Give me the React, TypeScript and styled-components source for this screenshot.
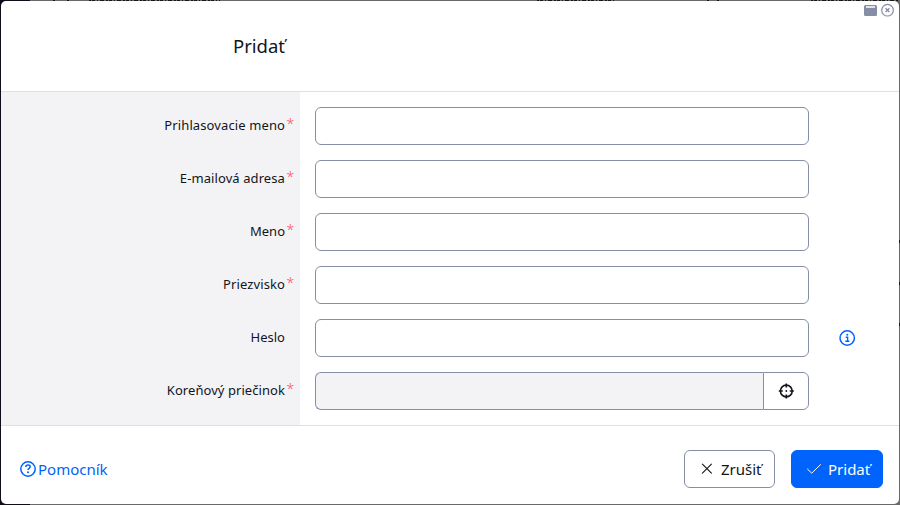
import React from 'react';
import styled, { createGlobalStyle, css } from 'styled-components';

const GlobalStyle = createGlobalStyle`
  *, *::before, *::after { box-sizing: border-box; }
  body {
    margin: 0;
    overflow: hidden;
    background: #69696a;
    color: #13151b;
    font-family: "Noto Sans", "Open Sans", sans-serif;
  }
`;

const Backdrop = styled.div`
  position: relative;
  height: 505px;
  padding: 1px;
  background: linear-gradient(90deg, #100c18 30px, #69696a 30px);
`;

const PageTrace = styled.svg`
  position: absolute;
  inset: 0;
  width: 900px;
  height: 505px;
`;

const Dialog = styled.section`
  position: relative;
  display: flex;
  flex-direction: column;
  height: 503px;
  background: #fff;
  border-radius: 5px;
  overflow: hidden;
`;

const Header = styled.header`
  display: flex;
  flex: 0 0 91px;
  align-items: center;
  padding-left: 232px;
  border-bottom: 1px solid #dfe0e3;
`;

const Title = styled.h1`
  margin: 0;
  font-size: 18.5px;
  font-weight: 400;
  line-height: 28px;
`;

const WindowControls = styled.div`
  position: absolute;
  top: 2px;
  right: 4px;
  display: flex;
  gap: 3px;
`;

const IconButton = styled.button`
  display: flex;
  padding: 0;
  border: 0;
  background: none;
  color: #868ea5;
`;

const Form = styled.form`
  flex: 0 0 333px;
  padding-top: 15px;
  background: linear-gradient(90deg, #f3f3f6 299px, #fff 299px);
`;

const Row = styled.div`
  display: grid;
  grid-template-columns: 299px 524px 45px;
  height: 38px;
  margin-bottom: 15px;
`;

const Label = styled.label<{ $track: number }>`
  justify-self: end;
  position: relative;
  margin-right: 15px;
  font-size: 13px;
  line-height: 36px;
  letter-spacing: ${({ $track }) => $track}px;
  white-space: nowrap;
`;

const Required = styled.span`
  position: absolute;
  left: calc(100% + 1.5px);
  top: -1px;
  color: #ff4b58;
  font-size: 14px;
  font-weight: 300;
  letter-spacing: 0;
`;

const Field = styled.div`
  display: flex;
  padding: 0 15px;
`;

const Input = styled.input<{ $joined?: boolean }>`
  flex: 1;
  min-width: 0;
  height: 38px;
  padding: 0 12px;
  border: 1px solid #868ea5;
  border-radius: 6px;
  outline: 0;
  background: #fff;
  font: inherit;
  ${({ $joined }) => $joined && css`
    border-radius: 6px 0 0 6px;
    border-right: 0;
    background: #f3f3f6;
  `}
`;

const PickButton = styled.button`
  display: flex;
  align-items: center;
  justify-content: center;
  width: 46px;
  height: 38px;
  padding: 0;
  border: 1px solid #868ea5;
  border-radius: 0 6px 6px 0;
  background: #fff;
  color: #13151b;
`;

const Hint = styled.div`
  display: flex;
  align-items: center;
  padding-left: 15px;
  color: #0063fb;
`;

const Footer = styled.footer`
  display: flex;
  flex: 1;
  align-items: center;
  gap: 16px;
  padding: 8px 16px 0 18px;
  border-top: 1px solid #dfe0e3;
`;

const HelpLink = styled.a`
  display: flex;
  align-items: center;
  gap: 1px;
  margin-right: auto;
  color: #0063fb;
  font-size: 15px;
  line-height: 24px;
`;

const Button = styled.button<{ $primary?: boolean }>`
  display: flex;
  align-items: center;
  gap: 6px;
  width: ${({ $primary }) => ($primary ? 92 : 91)}px;
  height: 38px;
  padding: 0 0 0 14px;
  border: 1px solid ${({ $primary }) => ($primary ? '#0063fb' : '#868ea5')};
  border-radius: 6px;
  background: ${({ $primary }) => ($primary ? '#0063fb' : '#fff')};
  color: ${({ $primary }) => ($primary ? '#fff' : '#13151b')};
  font: inherit;
  font-size: 15px;
  white-space: nowrap;
`;

const WindowIcon = () => (
  <svg width="15" height="16" viewBox="0 0 15 16">
    <rect x="1" y="2" width="13" height="11" rx="1.5" fill="currentColor" />
    <path d="M3 4h9" stroke="#fff" strokeWidth="1.3" />
  </svg>
);

const CloseIcon = () => (
  <svg width="14" height="16" viewBox="0 0 14 16" fill="none" stroke="currentColor">
    <circle cx="6.5" cy="7.2" r="5.8" strokeWidth="1.2" />
    <path d="m4.6 5.3 3.8 3.8M8.4 5.3 4.6 9.1" strokeWidth="1.4" />
  </svg>
);

const InfoIcon = () => (
  <svg width="17" height="17" viewBox="0 0 17 17" fill="none" stroke="currentColor">
    <circle cx="8.2" cy="8" r="7.2" strokeWidth="1.5" />
    <path d="M6.7 7.2h1.9v4.1M6.3 11.3h4" strokeWidth="1.4" />
    <circle cx="8.3" cy="4.7" r="1" fill="currentColor" stroke="none" />
  </svg>
);

const HelpIcon = () => (
  <svg width="18" height="18" viewBox="0 0 18 18" fill="none" stroke="currentColor">
    <circle cx="9" cy="9" r="7.2" strokeWidth="1.5" />
    <path d="M6.8 7c.1-1.3 1-1.9 2.2-1.9 1.3 0 2.2.7 2.2 1.7 0 1.5-2.1 1.5-2.1 3.1" strokeWidth="1.5" />
    <circle cx="9" cy="12.2" r="1" fill="currentColor" stroke="none" />
  </svg>
);

const TargetIcon = () => (
  <svg width="16" height="16" viewBox="0 0 16 16" fill="none" stroke="currentColor">
    <circle cx="8.3" cy="8" r="5.9" strokeWidth="1.6" />
    <path d="M8.3 .5v4M8.3 11.5v4M.8 8h4M11.8 8h4" strokeWidth="1.6" />
    <circle cx="8.3" cy="8" r=".9" fill="currentColor" stroke="none" />
  </svg>
);

const CancelIcon = () => (
  <svg width="16" height="16" viewBox="0 0 16 16" fill="none" stroke="currentColor" strokeLinecap="round">
    <path d="m3.4 3.2 9 9M12.4 3.2l-9 9" strokeWidth="1.1" />
  </svg>
);

const CheckIcon = () => (
  <svg width="16" height="16" viewBox="0 0 16 16" fill="none" stroke="currentColor" strokeLinecap="round" strokeLinejoin="round">
    <path d="m1.5 8.1 4.2 4.1 8.8-8.6" strokeWidth="1" />
  </svg>
);

const FIELDS = [
  { id: 'login', label: 'Prihlasovacie meno', required: true, track: 0.11 },
  { id: 'email', label: 'E-mailová adresa', required: true, track: 0.09 },
  { id: 'firstName', label: 'Meno', required: true, track: 0 },
  { id: 'lastName', label: 'Priezvisko', required: true, track: 0.1 },
  { id: 'password', label: 'Heslo', required: false, track: 0 },
  { id: 'folder', label: 'Koreňový priečinok', required: true, track: 0.06 },
];

export default function App() {
  return (
    <>
      <GlobalStyle />
      <Backdrop>
        <PageTrace viewBox="0 0 900 505" fill="none" stroke="#171719">
          <path d="M53 .5h2M67 .5h2" />
          <path d="M89 .5h131M537 .5h79M811 .5h87" strokeDasharray="2 1 3 2 1 2 4 2" />
          <path d="M707 .5h2M717 .5h2" />
          <path d="M899.5 240v3M899.5 282v3M899.5 323v3" />
        </PageTrace>
        <Dialog role="dialog" aria-labelledby="dialog-title">
          <Header>
            <Title id="dialog-title">Pridať</Title>
          </Header>
          <WindowControls>
            <IconButton type="button"><WindowIcon /></IconButton>
            <IconButton type="button"><CloseIcon /></IconButton>
          </WindowControls>
          <Form>
            {FIELDS.map(({ id, label, required, track }) => (
              <Row key={id}>
                <Label htmlFor={id} $track={track}>
                  {label}
                  {required && <Required>*</Required>}
                </Label>
                <Field>
                  <Input id={id} $joined={id === 'folder'} readOnly={id === 'folder'} />
                  {id === 'folder' && <PickButton type="button"><TargetIcon /></PickButton>}
                </Field>
                {id === 'password' && <Hint><InfoIcon /></Hint>}
              </Row>
            ))}
          </Form>
          <Footer>
            <HelpLink><HelpIcon />Pomocník</HelpLink>
            <Button type="button"><CancelIcon />Zrušiť</Button>
            <Button type="button" $primary><CheckIcon />Pridať</Button>
          </Footer>
        </Dialog>
      </Backdrop>
    </>
  );
}
